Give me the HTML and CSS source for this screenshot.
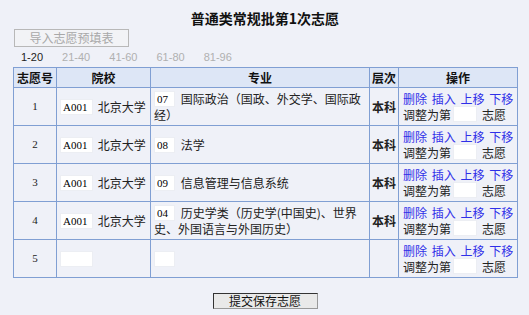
FILE: index.html
```html
<!DOCTYPE html>
<html lang="zh-CN">
<head>
  <meta charset="UTF-8" />
  <title>普通类常规批第1次志愿</title>
  <link rel="stylesheet" href="styles.css">
</head>
<body>
  <div class="page">
    <h2 class="title">普通类常规批第1次志愿</h2>
    <div class="toolbar">
      <button class="import-btn" disabled>导入志愿预填表</button>
    </div>
    <div class="pager">
      <span class="current">1-20</span>
      <a href="#">21-40</a>
      <a href="#">41-60</a>
      <a href="#">61-80</a>
      <a href="#">81-96</a>
    </div>
    <table class="wish-table">
      <colgroup>
        <col class="c-no"><col class="c-school"><col class="c-major"><col class="c-level"><col class="c-ops">
      </colgroup>
      <thead>
        <tr><th>志愿号</th><th>院校</th><th>专业</th><th>层次</th><th>操作</th></tr>
      </thead>
      <tbody>
        <tr>
          <td class="no">1</td>
          <td class="school"><input class="code" type="text" value="A001"> 北京大学</td>
          <td class="major"><input class="mcode" type="text" value="07"> 国际政治（国政、外交学、国际政经）</td>
          <td class="level">本科</td>
          <td class="ops">
            <div class="ops-links"><a href="#">删除</a> <a href="#">插入</a> <a href="#">上移</a> <a href="#">下移</a></div>
            <div class="ops-move">调整为第 <input class="pos" type="text"> 志愿</div>
          </td>
        </tr>
        <tr>
          <td class="no">2</td>
          <td class="school"><input class="code" type="text" value="A001"> 北京大学</td>
          <td class="major"><input class="mcode" type="text" value="08"> 法学</td>
          <td class="level">本科</td>
          <td class="ops">
            <div class="ops-links"><a href="#">删除</a> <a href="#">插入</a> <a href="#">上移</a> <a href="#">下移</a></div>
            <div class="ops-move">调整为第 <input class="pos" type="text"> 志愿</div>
          </td>
        </tr>
        <tr>
          <td class="no">3</td>
          <td class="school"><input class="code" type="text" value="A001"> 北京大学</td>
          <td class="major"><input class="mcode" type="text" value="09"> 信息管理与信息系统</td>
          <td class="level">本科</td>
          <td class="ops">
            <div class="ops-links"><a href="#">删除</a> <a href="#">插入</a> <a href="#">上移</a> <a href="#">下移</a></div>
            <div class="ops-move">调整为第 <input class="pos" type="text"> 志愿</div>
          </td>
        </tr>
        <tr>
          <td class="no">4</td>
          <td class="school"><input class="code" type="text" value="A001"> 北京大学</td>
          <td class="major"><input class="mcode" type="text" value="04"> 历史学类（历史学(中国史)、世界史、外国语言与外国历史）</td>
          <td class="level">本科</td>
          <td class="ops">
            <div class="ops-links"><a href="#">删除</a> <a href="#">插入</a> <a href="#">上移</a> <a href="#">下移</a></div>
            <div class="ops-move">调整为第 <input class="pos" type="text"> 志愿</div>
          </td>
        </tr>
        <tr>
          <td class="no">5</td>
          <td class="school"><input class="code" type="text"></td>
          <td class="major"><input class="mcode" type="text"></td>
          <td class="level"></td>
          <td class="ops">
            <div class="ops-links"><a href="#">删除</a> <a href="#">插入</a> <a href="#">上移</a> <a href="#">下移</a></div>
            <div class="ops-move">调整为第 <input class="pos" type="text"> 志愿</div>
          </td>
        </tr>
      </tbody>
    </table>
    <div class="submit-row">
      <button class="submit-btn" type="button">提交保存志愿</button>
    </div>
  </div>
</body>
</html>
```

FILE: styles.css
```css
body {
  margin: 0;
  background: #eff1f8;
  font-family: "Noto Sans CJK SC", sans-serif;
  font-size: 12px;
  color: #222;
}
.page {
  padding: 9px 12px 0 13px;
}
.title {
  margin: 0;
  text-align: center;
  font-size: 14px;
  line-height: 18px;
  font-weight: bold;
  color: #111;
}
.toolbar {
  margin-top: 2px;
  height: 18px;
}
.import-btn {
  width: 115px;
  height: 18px;
  margin-left: 1px;
  padding: 0;
  background: #f2f3f6;
  border: 1px solid #b8b8b8;
  color: #a8a8a8;
  font-family: "Noto Sans CJK SC", sans-serif;
  font-size: 12px;
  line-height: 14px;
}
.pager {
  height: 20px;
  line-height: 20px;
  padding-left: 8px;
  font-family: "Liberation Sans", sans-serif;
  font-size: 11px;
}
.pager span, .pager a {
  margin-right: 16px;
}
.pager .current {
  color: #222;
}
.pager a {
  color: #b0b0b0;
  text-decoration: none;
}
.wish-table {
  width: 505px;
  border-collapse: collapse;
  table-layout: fixed;
}
.c-no { width: 43px; }
.c-school { width: 94px; }
.c-major { width: 219px; }
.c-level { width: 29px; }
.c-ops { width: 119px; }
.wish-table th, .wish-table td {
  border: 1px solid #809fd3;
  padding: 0;
}
.wish-table th {
  background: #dde6f6;
  height: 19px;
  font-weight: bold;
  font-size: 12px;
  line-height: 14px;
  color: #111;
}
.wish-table td {
  height: 37px;
  line-height: 15px;
  vertical-align: middle;
}
.no {
  text-align: center;
  font-family: "Liberation Serif", serif;
  font-size: 11px;
}
.wish-table .school {
  padding-left: 3px;
}
.wish-table .major {
  padding-left: 3px;
  padding-right: 3px;
}
.level {
  text-align: center;
  font-weight: bold;
}
.wish-table .ops {
  padding-left: 4px;
}
.ops-links {
  height: 15px;
  white-space: nowrap;
  word-spacing: 2px;
}
.ops-move {
  display: flex;
  align-items: center;
  height: 16px;
  white-space: nowrap;
}
.ops a {
  color: #2f2fe8;
  text-decoration: none;
}
input[type="text"] {
  box-sizing: border-box;
  height: 16px;
  padding: 0 2px;
  border: 1px solid #eceef3;
  background: #fff;
  font-family: "Liberation Serif", serif;
  font-size: 11px;
  line-height: 14px;
  vertical-align: top;
}
.code {
  width: 33px;
  margin-right: 2px;
}
.mcode {
  width: 21px;
  margin-right: 3px;
}
.pos {
  width: 24px;
  margin: 0 5px 0 2px;
}
.submit-row {
  text-align: center;
  padding-top: 14px;
}
.submit-btn {
  width: 105px;
  height: 16px;
  padding: 0;
  background: #e9e9e9;
  border: 1px solid #333;
  border-right-color: #999;
  border-bottom-color: #999;
  font-family: "Noto Sans CJK SC", sans-serif;
  font-size: 12px;
  line-height: 13px;
  color: #111;
}
```
